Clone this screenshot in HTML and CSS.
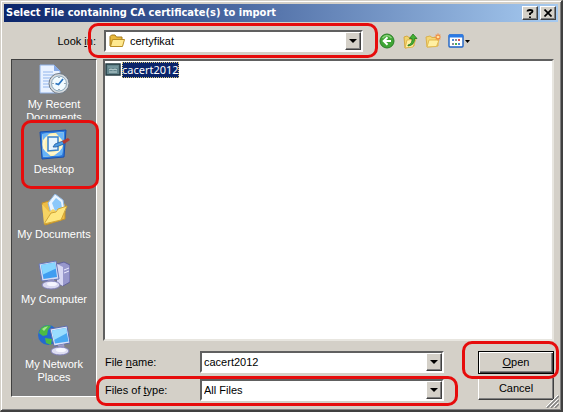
FILE: index.html
```
<!DOCTYPE html>
<html lang="en">
<head>
    <meta charset="UTF-8">
    <meta name="viewport" content="width=device-width, initial-scale=1.0">
    <title>Select File containing CA certificate(s) to import</title>
    <link rel="stylesheet" href="styles.css">
</head>
<body>

    <form class="dialog" onsubmit="return false">
        <header class="title-bar">
            <h1>Select File containing CA certificate(s) to import</h1>
            <button type="button" class="title-button" aria-label="Help">
                <svg width="8" height="9" viewBox="0 0 8 9"><path d="M1.5 2.5Q1.5 1 4 1T6.500 2.500Q6.500 3.500 4 4.500V6M4 7.500V9" fill="none" stroke="#000" stroke-width="1.800"/></svg>
            </button>
            <button type="button" class="title-button close" aria-label="Close">
                <svg width="8" height="8" viewBox="0 0 8 8"><path d="M0.500 0.500l7 7M7.500 0.500l-7 7" stroke="#000" stroke-width="1.700"/></svg>
            </button>
        </header>

        <div class="look-in">
            <label for="folder">Look <u>i</u>n:</label>
            <div class="marked folder-box">
                <div class="combo">
                    <svg class="folder-icon" width="16" height="16" viewBox="0 0 16 16">
                        <path d="M1 13V3.500L2.500 2H6l1.500 2H13v9z" fill="#e9b93c" stroke="#a77c1c"/>
                        <path d="M1.500 13.500L3.500 6.500H15.500L13.500 13.500z" fill="#ffe98f" stroke="#b98e25"/>
                    </svg>
                    <select id="folder">
                        <option>certyfikat</option>
                    </select>
                    <span class="arrow"></span>
                </div>
            </div>
            <div class="tools">
                <button type="button" aria-label="Back">
                    <svg width="16" height="16" viewBox="0 0 16 16">
                        <circle cx="8" cy="8" r="7" fill="#3fa535" stroke="#2a7f27"/>
                        <path d="M3.500 5Q8 0 12.500 5" fill="none" stroke="#8bd47c" stroke-width="1.500"/>
                        <path d="M12 8H5M8.500 4.200L4.700 8l3.800 3.800" fill="none" stroke="#fff" stroke-width="2"/>
                    </svg>
                </button>
                <button type="button" aria-label="Up one level">
                    <svg width="16" height="16" viewBox="0 0 16 16">
                        <path d="M2 4l3-1 2 1.500 5-.5v9L3 15z" fill="#f2d46b" stroke="#d5a942"/>
                        <path d="M3 15L5 7l9-1-3 8z" fill="#fff0a3" stroke="#dfb54c"/>
                        <path d="M6 12Q10.500 11 10 5.500H7.500L11 1l4 4.500H12.500Q13 12 6 13z" fill="#44b332" stroke="#24751e" stroke-width=".8"/>
                    </svg>
                </button>
                <button type="button" aria-label="Create new folder">
                    <svg width="16" height="16" viewBox="0 0 16 16">
                        <path d="M1 4l4-1 2 1.500h6V13L2 14z" fill="#f4d775" stroke="#dbb04b"/>
                        <path d="M2 14L4 7h10l-2.500 6.500z" fill="#fff0a3" stroke="#e1b94f"/>
                        <path d="M13 0.500v7M9.500 4h7M10.700 1.700l4.600 4.600M15.300 1.700l-4.600 4.600" stroke="#f28a3c" stroke-width="1.200"/>
                        <circle cx="13" cy="4" r="1.300" fill="#ffe3a0"/>
                    </svg>
                </button>
                <button type="button" class="views" aria-label="View menu">
                    <svg width="23" height="16" viewBox="0 0 23 16">
                        <rect x="1" y="2" width="14" height="12" rx="1" fill="#fff" stroke="#1c62c6" stroke-width="1.400"/>
                        <path d="M1 3h14" stroke="#2a7ae6" stroke-width="3"/>
                        <path d="M4 6h2v2H4zM10 10h2v2h-2z" fill="#4a8ad8"/>
                        <path d="M7 6h2v2H7zM4 10h2v2H4z" fill="#8a8a9a"/>
                        <path d="M10 6h2v2h-2z" fill="#d9534a"/>
                        <path d="M7 10h2v2H7z" fill="#4caf50"/>
                        <path d="M17 7h5l-2.500 3z" fill="#000"/>
                    </svg>
                </button>
            </div>
        </div>

        <div class="content">
            <nav class="places">
                <button type="button" class="place">
                    <svg width="32" height="32" viewBox="0 0 32 32">
                        <path d="M2 1h14l6 6v22H2z" fill="#e9f2ff" stroke="#8fb1e6"/>
                        <path d="M16 1v6h6z" fill="#86a9e4"/>
                        <path d="M5 8h10M5 11h11M5 14h8M5 17h6M5 20h6M5 23h7" stroke="#91b5ec"/>
                        <circle cx="21" cy="19.500" r="10" fill="#d6dade" stroke="#707b86"/>
                        <circle cx="21" cy="19.500" r="7.500" fill="#f2fbff" stroke="#8ba8bb"/>
                        <path d="M21 13v1M21 25v1M14.500 19.500h1M26.500 19.500h1" stroke="#456"/>
                        <path d="M25 15l-4.500 5.500-3-1" fill="none" stroke="#2b75c1" stroke-width="1.700"/>
                    </svg>
                    <span>My Recent Documents</span>
                </button>
                <div class="marked desktop-box">
                    <button type="button" class="place">
                        <svg width="32" height="32" viewBox="0 0 32 32">
                            <path d="M2 3l26-2-2 27-22 2z" fill="#2b7be0" stroke="#174fae"/>
                            <path d="M4 5l22-2-2 23-19 2z" fill="#fff1b0"/>
                            <path d="M4 5l8-1-7 7zM26 3l-1 9-7-8zM24 26l-8 1 9-9zM5 28l-.5-9 8 8z" fill="#67b4fa"/>
                            <circle cx="14.500" cy="15.500" r="9" fill="none" stroke="#fff8d4" stroke-width="2"/>
                            <path d="M10 8h10v13l-10 1z" fill="#e8f5ff" stroke="#3b83cb" stroke-width="1.500"/>
                            <path d="M15 18l2-3 8-3 1 3-8 3z" fill="#4b9be3" stroke="#235c9d" stroke-width=".8"/>
                            <path d="M24 12l6-3 2 2-6 4z" fill="#b3382f"/>
                        </svg>
                        <span>Desktop</span>
                    </button>
                </div>
                <button type="button" class="place">
                    <svg width="32" height="32" viewBox="0 0 32 32">
                        <path d="M4 9l7-2 4 4 12-1v15L7 31z" fill="#eebd45" stroke="#c49128"/>
                        <path d="M10 9L17 0l8 6 2 11-13 6z" fill="#eaf5ff" stroke="#8eb6e2"/>
                        <path d="M14 9l4-5 5 4 1 6-7 3z" fill="#8bc8fa"/>
                        <path d="M4 10l2 20 9-4 3-9-3-2-4 3z" fill="#f6d362"/>
                        <path d="M6 30l7-11 5-1 2-3 9-3-6 14z" fill="#ffe780" stroke="#d1a536"/>
                    </svg>
                    <span>My Documents</span>
                </button>
                <button type="button" class="place">
                    <svg width="32" height="32" viewBox="0 0 32 32">
                        <path d="M19 5l7-2 6 3v17l-7 4-6-3z" fill="#9797cc" stroke="#62629b"/>
                        <path d="M19 5l6 3v19l-6-3z" fill="#d7d7f3"/>
                        <path d="M26 11l5-2M26 14l5-2" stroke="#e9e9ff"/>
                        <path d="M1 5l17-3 3 18-17 2z" fill="#d5dcf5" stroke="#6675b5"/>
                        <path d="M3 6l14-2.500 2 14.500-13.500 2z" fill="#3f9df1"/>
                        <path d="M3 6l14-2.500 1 6-13 6z" fill="#86d6ff"/>
                        <path d="M10 21l6-1 1 5h-6z" fill="#9c9cc9"/>
                        <ellipse cx="13" cy="26" rx="9" ry="4" fill="#d9d9f1" stroke="#8080b7"/>
                        <ellipse cx="14" cy="25" rx="5" ry="2" fill="#f5f5ff"/>
                    </svg>
                    <span>My Computer</span>
                </button>
                <button type="button" class="place">
                    <svg width="32" height="32" viewBox="0 0 32 32">
                        <circle cx="10" cy="11" r="10" fill="#2469cf"/>
                        <path d="M3 4Q8 0 13 2l-3 4-1 5-4 1-4-3zM7 14l7 1-1 6-5-2z" fill="#4cbb43"/>
                        <path d="M4 5Q7 2 10 2.500L6 7z" fill="#a5e593"/>
                        <path d="M12 5l17-3 3 17-16 3z" fill="#dce2f8" stroke="#5c6cae"/>
                        <path d="M14 6.500l14-2.500 2.500 13.500-13.500 2z" fill="#4aa9f2"/>
                        <path d="M14 6.500l14-2.500 1 5-13 7z" fill="#9addff"/>
                        <path d="M20 21l6-1 1 6h-6z" fill="#9c9cc9"/>
                        <ellipse cx="22" cy="27" rx="9" ry="4" fill="#dedef2" stroke="#8080b7"/>
                        <ellipse cx="23" cy="26" rx="5" ry="2" fill="#f8f8ff"/>
                    </svg>
                    <span>My Network Places</span>
                </button>
            </nav>

            <div class="main">
                <ul class="files">
                    <li>
                        <svg width="16" height="16" viewBox="0 0 16 16">
                            <rect x="1" y="2" width="14" height="11" fill="#63858c" stroke="#243b42" stroke-width="1.500"/>
                            <path d="M3 5h10" stroke="#84a5ab"/>
                            <path d="M4 8l2-1 2 1 2-1 2 1M4 10h8" fill="none" stroke="#c5d9da"/>
                        </svg>
                        <span class="selected">cacert2012</span>
                    </li>
                </ul>

                <div class="bottom">
                    <div class="fields">
                        <div class="field">
                            <label for="filename">File <u>n</u>ame:</label>
                            <div class="combo">
                                <input type="text" id="filename" value="cacert2012">
                                <span class="arrow"></span>
                            </div>
                        </div>
                        <div class="field marked type-box">
                            <label for="filetype">Files of <u>t</u>ype:</label>
                            <div class="combo">
                                <select id="filetype">
                                    <option>All Files</option>
                                </select>
                                <span class="arrow"></span>
                            </div>
                        </div>
                    </div>
                    <div class="actions">
                        <div class="marked open-box">
                            <button type="submit" class="default"><u>O</u>pen</button>
                        </div>
                        <button type="button">Cancel</button>
                    </div>
                </div>
            </div>
        </div>

        <svg class="grip" width="13" height="13" viewBox="0 0 13 13">
            <path d="M1 13L13 1M5 13l8-8M9 13l4-4" stroke="#808080" stroke-width="1.500"/>
            <path d="M0 12L12 0M4 12l8-8M8 12l4-4" stroke="#fff"/>
        </svg>
    </form>

</body>
</html>
```
FILE: styles.css
```
* {
    box-sizing: border-box;
}

body {
    margin: 0;
    background: #d4d0c8;
    color: #000;
    font: 11px/13px "Liberation Sans", Arial, sans-serif;
}

button, input, select {
    font: inherit;
    color: inherit;
}

.dialog {
    position: relative;
    display: flex;
    flex-direction: column;
    min-height: 100vh;
    padding: 3px;
    border: 1px solid #d4d0c8;
    border-right: 2px solid #404040;
    border-bottom: 2px solid #404040;
    box-shadow: inset 1px 1px #fff, inset -1px -1px #808080;
}

/* title bar */

.title-bar {
    display: flex;
    align-items: center;
    height: 18px;
    padding: 0 2px;
    background: linear-gradient(to right, #0a246a, #a6caf0);
}

.title-bar h1 {
    flex: 1;
    margin: 0;
    color: #fff;
    font: bold 11px/18px "DejaVu Sans Condensed", Tahoma, sans-serif;
    white-space: nowrap;
}

.title-button {
    display: flex;
    align-items: center;
    justify-content: center;
    width: 16px;
    height: 14px;
    padding: 0;
}

.title-button.close {
    margin-left: 2px;
}

.title-button, .actions button, .arrow {
    background: #d4d0c8;
    border: 1px solid;
    border-color: #fff #404040 #404040 #fff;
    box-shadow: inset -1px -1px #808080;
}

/* combo boxes */

.combo {
    display: flex;
    align-items: center;
    position: relative;
    flex: 1;
    height: 22px;
    background: #fff;
    border: 2px solid;
    border-color: #606060 #fff #fff #606060;
}

.combo select, .combo input {
    appearance: none;
    flex: 1;
    min-width: 0;
    height: 18px;
    padding: 0 2px;
    background: transparent;
    border: 0;
    border-radius: 0;
    outline: 0;
}

.folder-icon {
    margin: 0 3px;
}

.arrow {
    display: flex;
    align-items: center;
    justify-content: center;
    width: 16px;
    height: 18px;
    pointer-events: none;
}

.arrow::before {
    content: "";
    border: 4px solid transparent;
    border-top-color: #000;
    border-bottom: 0;
}

/* look in */

.look-in {
    display: flex;
    align-items: center;
    padding: 8px 87px 7px 0;
}

.look-in > label {
    width: 100px;
    padding-right: 8px;
    text-align: right;
}

.folder-box {
    display: flex;
    flex: 1;
}

.tools {
    display: flex;
    gap: 7px;
    margin-left: 16px;
}

.tools button {
    display: flex;
    padding: 0;
    background: none;
    border: 0;
}

/* places and files */

.content {
    display: flex;
    flex: 1;
    gap: 6px;
    padding: 0 4px 6px 7px;
}

.places {
    display: flex;
    flex-direction: column;
    gap: 10px;
    width: 86px;
    margin-bottom: 4px;
    padding-top: 4px;
    background: #808080;
    border: 1px solid;
    border-color: #404040 #fff #fff #404040;
}

.place {
    display: flex;
    flex-direction: column;
    align-items: center;
    gap: 2px;
    width: 100%;
    height: 55px;
    padding: 0;
    overflow: hidden;
    background: none;
    border: 0;
    color: #fff;
}

.place:last-child {
    overflow: visible;
}

.place svg {
    flex-shrink: 0;
}

.place span {
    max-width: 76px;
}

.main {
    display: flex;
    flex-direction: column;
    flex: 1;
}

.files {
    flex: 1;
    margin: 0;
    padding: 0;
    list-style: none;
    background: #fff;
    border: 2px solid;
    border-color: #606060 #e8e6e0 #e8e6e0 #606060;
}

.files li {
    display: flex;
    align-items: center;
    gap: 1px;
    height: 17px;
}

.selected {
    background: #0a246a;
    color: #fff;
    outline: 1px dotted #d8c878;
    outline-offset: -1px;
    font: 11px/16px "Noto Sans", Tahoma, sans-serif;
}

/* name, type and buttons */

.bottom {
    display: flex;
    justify-content: space-between;
    padding-top: 10px;
}

.fields {
    display: flex;
    flex-direction: column;
    flex: 1;
    gap: 6px;
}

.field {
    display: flex;
    align-items: center;
}

.field label {
    width: 97px;
    padding-left: 2px;
}

.actions {
    display: flex;
    flex-direction: column;
    gap: 3px;
    width: 76px;
    margin-left: 34px;
}

.actions button {
    display: block;
    width: 100%;
    height: 23px;
    padding: 0;
}

.actions .default {
    border-color: #000;
    box-shadow: inset 1px 1px #fff, inset -1px -1px #404040, inset -2px -2px #808080;
}

/* red frames around the steps to follow */

.marked {
    position: relative;
}

.marked::after {
    content: "";
    position: absolute;
    border: 3px solid #e60c0c;
    border-radius: 10px;
    pointer-events: none;
}

.desktop-box, .place {
    flex-shrink: 0;
}

.folder-box::after {
    inset: -7px -15px -6px -16px;
}

.desktop-box::after {
    inset: -9px -3px -5px 9px;
}

.type-box::after {
    inset: -3px -14px -5px -7px;
}

.open-box::after {
    inset: -10px -5px -5px -16px;
}

.grip {
    position: absolute;
    right: 2px;
    bottom: 2px;
}
```
